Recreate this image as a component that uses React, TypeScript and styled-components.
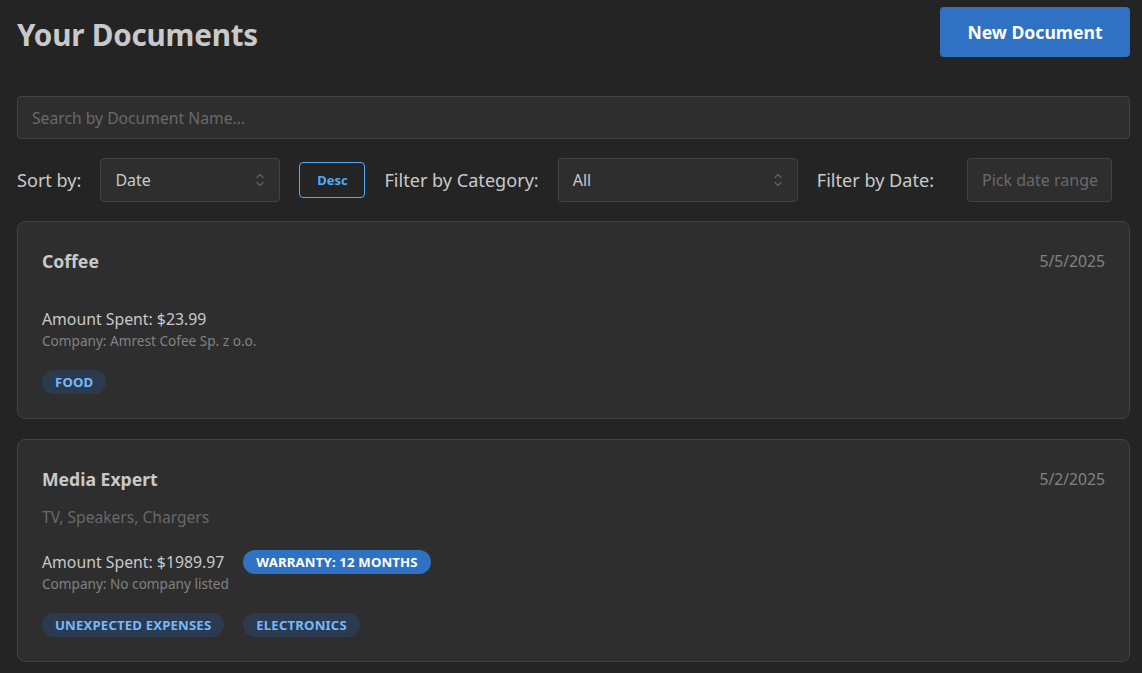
import React from "react";
import styled, { createGlobalStyle } from "styled-components";

const Global = createGlobalStyle`
  html, body { margin: 0; padding: 0; background: #242424; }
  body { font-family: "Noto Sans", "Open Sans", sans-serif; color: #c9c9c9; }
  * { box-sizing: border-box; }
`;

const Page = styled.div`
  padding: 7px 12px 16px 17px;
  display: flex;
  flex-direction: column;
`;

const Header = styled.header`
  display: flex;
  justify-content: space-between;
  align-items: flex-start;
  height: 50px;
`;

const Title = styled.h1`
  margin: 8px 0 0;
  font-size: 29.6px;
  line-height: 40px;
  font-weight: 700;
  color: #c9c9c9;
  letter-spacing: -0.2px;
`;

const PrimaryButton = styled.button`
  height: 50px;
  width: 190px;
  background: #2f71c3;
  color: #fff;
  border: none;
  border-radius: 4px;
  font-family: inherit;
  font-size: 17.6px;
  font-weight: 700;
`;

const SearchInput = styled.div`
  margin-top: 39px;
  height: 43px;
  background: #2e2e2e;
  border: 1px solid #424242;
  border-radius: 4px;
  display: flex;
  align-items: center;
  padding-left: 14px;
  font-size: 15.7px;
  color: #696969;
`;

const Toolbar = styled.div`
  margin-top: 19px;
  display: flex;
  align-items: center;
  gap: 19px;
  height: 44px;
`;

const Label = styled.span<{ $extra?: number }>`
  font-size: 18.1px;
  color: #c9c9c9;
  margin-right: ${(p) => p.$extra ?? 0}px;
  white-space: nowrap;
`;

const SelectBox = styled.div<{ $w: number }>`
  width: ${(p) => p.$w}px;
  height: 44px;
  background: #2e2e2e;
  border: 1px solid #424242;
  border-radius: 4px;
  display: flex;
  align-items: center;
  justify-content: space-between;
  padding: 0 14px 0 14px;
  font-size: 16px;
  color: #c9c9c9;
`;

const Placeholder = styled.span`
  color: #696969;
  font-size: 16px;
  white-space: nowrap;
`;

const OutlineButton = styled.button`
  height: 36px;
  width: 66px;
  background: transparent;
  border: 1px solid #4dabf7;
  border-radius: 4px;
  color: #4dabf7;
  font-family: inherit;
  font-size: 13px;
  font-weight: 700;
`;

const Cards = styled.div`
  margin-top: 19px;
  display: flex;
  flex-direction: column;
  gap: 20px;
`;

const Card = styled.article`
  background: #2e2e2e;
  border: 1px solid #424242;
  border-radius: 8px;
  padding: 24px;
  display: flex;
  flex-direction: column;
`;

const CardHeader = styled.div`
  display: flex;
  justify-content: space-between;
  align-items: center;
  height: 29px;
`;

const CardTitle = styled.h3`
  margin: 0;
  font-size: 17.6px;
  font-weight: 700;
  color: #c9c9c9;
`;

const DateText = styled.span`
  font-size: 15.7px;
  color: #828282;
`;

const Description = styled.div`
  margin-top: 12px;
  font-size: 15.6px;
  line-height: 25px;
  color: #696969;
`;

const AmountRow = styled.div`
  margin-top: 20px;
  display: flex;
  align-items: center;
  gap: 19px;
  height: 24px;
`;

const Amount = styled.span`
  font-size: 15.8px;
  color: #c9c9c9;
`;

const Company = styled.div`
  font-size: 13.6px;
  line-height: 20px;
  color: #828282;
`;

const Tags = styled.div`
  margin-top: 19px;
  display: flex;
  gap: 19px;
`;

const Badge = styled.span<{ $filled?: boolean }>`
  display: inline-flex;
  align-items: center;
  height: 24px;
  padding: 0 13px;
  border-radius: 12px;
  font-size: 13.2px;
  font-weight: 700;
  text-transform: uppercase;
  letter-spacing: 0.15px;
  background: ${(p) => (p.$filled ? "#2f71c3" : "#2b3a4f")};
  color: ${(p) => (p.$filled ? "#ffffff" : "#74b9fb")};
`;

const Chevron = () => (
  <svg width="10" height="16" viewBox="0 0 10 16" fill="none" stroke="#5c5f66" strokeWidth="1.3">
    <path d="M1.5 6 L5 2.5 L8.5 6" />
    <path d="M1.5 10 L5 13.5 L8.5 10" />
  </svg>
);

type Doc = {
  title: string;
  date: string;
  description?: string;
  amount: string;
  company: string;
  warranty?: string;
  tags: string[];
};

const docs: Doc[] = [
  {
    title: "Coffee",
    date: "5/5/2025",
    amount: "$23.99",
    company: "Amrest Cofee Sp. z o.o.",
    tags: ["Food"],
  },
  {
    title: "Media Expert",
    date: "5/2/2025",
    description: "TV, Speakers, Chargers",
    amount: "$1989.97",
    company: "No company listed",
    warranty: "Warranty: 12 months",
    tags: ["Unexpected expenses", "Electronics"],
  },
];

export default function App() {
  return (
    <>
      <Global />
      <Page>
        <Header>
          <Title>Your Documents</Title>
          <PrimaryButton>New Document</PrimaryButton>
        </Header>
        <SearchInput>Search by Document Name...</SearchInput>
        <Toolbar>
          <Label>Sort by:</Label>
          <SelectBox $w={180}>
            <span>Date</span>
            <Chevron />
          </SelectBox>
          <OutlineButton>Desc</OutlineButton>
          <Label>Filter by Category:</Label>
          <SelectBox $w={240}>
            <span>All</span>
            <Chevron />
          </SelectBox>
          <Label $extra={14}>Filter by Date:</Label>
          <SelectBox $w={145}>
            <Placeholder>Pick date range</Placeholder>
          </SelectBox>
        </Toolbar>
        <Cards>
          {docs.map((d) => (
            <Card key={d.title}>
              <CardHeader>
                <CardTitle>{d.title}</CardTitle>
                <DateText>{d.date}</DateText>
              </CardHeader>
              <Description>{d.description ?? ""}</Description>
              <AmountRow>
                <Amount>Amount Spent: {d.amount}</Amount>
                {d.warranty && <Badge $filled>{d.warranty}</Badge>}
              </AmountRow>
              <Company>Company: {d.company}</Company>
              <Tags>
                {d.tags.map((t) => (
                  <Badge key={t}>{t}</Badge>
                ))}
              </Tags>
            </Card>
          ))}
        </Cards>
      </Page>
    </>
  );
}
